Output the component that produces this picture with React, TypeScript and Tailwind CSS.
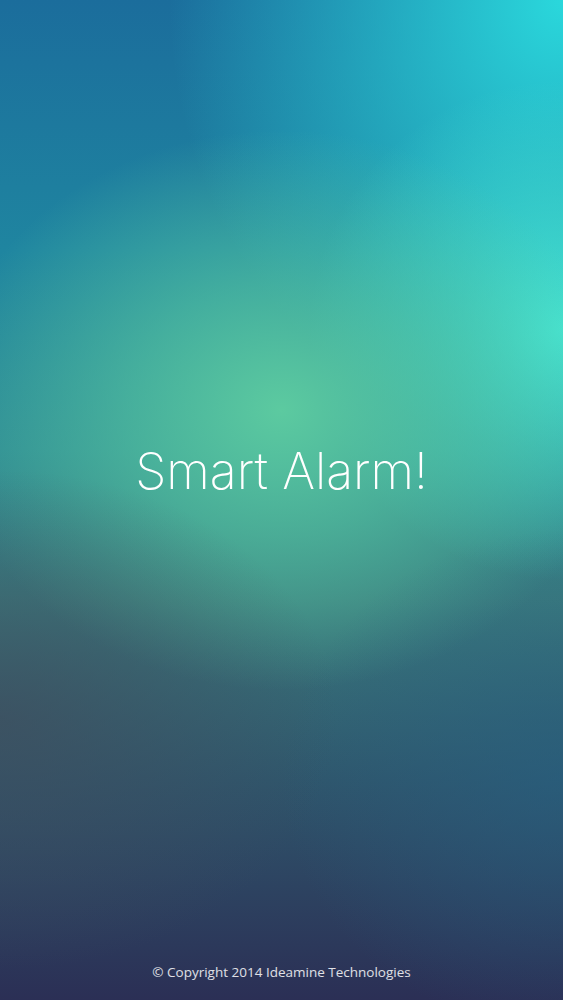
export default function App() {
  return (
    <div className="relative flex h-[1000px] w-full flex-col overflow-hidden bg-[#2a6f8f]">
      {/* blurred backdrop */}
      <div className="absolute inset-0 bg-[linear-gradient(to_bottom,#1b6d9c_0%,#1f85a0_25%,#2f8c94_45%,#3a7a7e_60%,#2f566c_78%,#2b2f55_100%)]" />
      <div className="absolute inset-0 bg-[radial-gradient(ellipse_70%_45%_at_100%_0%,#2ad8dc_0%,rgba(42,216,220,0.6)_40%,rgba(42,216,220,0)_100%)]" />
      <div className="absolute inset-0 bg-[radial-gradient(ellipse_45%_25%_at_100%_33%,#46e4d2_0%,rgba(70,228,210,0)_100%)]" />
      <div className="absolute inset-0 bg-[radial-gradient(ellipse_60%_28%_at_50%_41%,#5ccaa0_0%,rgba(88,200,160,0.6)_45%,rgba(88,200,160,0)_100%)]" />
      <div className="absolute inset-0 bg-[radial-gradient(ellipse_60%_25%_at_0%_72%,rgba(64,76,92,0.7)_0%,rgba(64,76,92,0)_100%)]" />
      <div className="absolute inset-0 bg-[radial-gradient(ellipse_50%_25%_at_100%_78%,rgba(38,96,130,0.6)_0%,rgba(38,96,130,0)_100%)]" />

      <div className="relative flex flex-1 items-center justify-center pb-[20px]">
        <h1 className="text-[50px] font-extralight leading-none text-white [font-family:'Helvetica_Neue',Inter,sans-serif]">
          Smart Alarm!
        </h1>
      </div>
      <footer className="relative pb-[18px] text-center text-[13.5px] text-white/85 [font-family:'Open_Sans',sans-serif]">
        © Copyright 2014 Ideamine Technologies
      </footer>
    </div>
  )
}
